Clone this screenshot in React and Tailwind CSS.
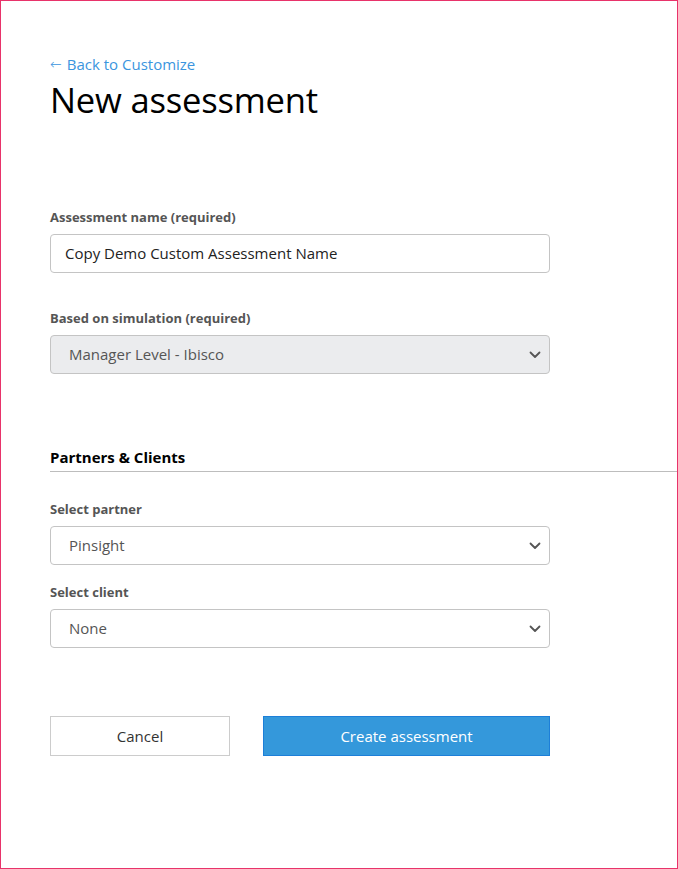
import React from "react";

const font = { fontFamily: '"Open Sans", "Noto Sans", sans-serif' };

function Chevron() {
  return (
    <svg width="12" height="8" viewBox="0 0 12 8" className="shrink-0">
      <path d="M1.5 1.5 L6 6 L10.5 1.5" fill="none" stroke="#555" strokeWidth="1.8" strokeLinecap="round" strokeLinejoin="round" />
    </svg>
  );
}

function Select({ value, disabled }) {
  return (
    <div
      className={`w-[500px] h-[39px] rounded-[4px] border border-[#c4c4c4] flex items-center justify-between pl-[18px] pr-[8px] ${
        disabled ? "bg-[#ebecee]" : "bg-white"
      }`}
    >
      <span className="text-[15px] text-[#555] leading-none">{value}</span>
      <Chevron />
    </div>
  );
}

function Label({ children, className = "" }) {
  return (
    <div className={`text-[13px] leading-[16px] font-bold text-[#555] ${className}`}>{children}</div>
  );
}

export default function App() {
  return (
    <div style={font} className="w-[678px] h-[869px] border border-[#e8336a] bg-white box-border overflow-hidden">
      <div className="flex flex-col pl-[49px] pt-[53px]">
        <a className="text-[15px] leading-[20px] text-[#3b95de] flex items-center gap-[5px]">
          <span className="font-['DejaVu_Sans',sans-serif] text-[14px] font-extralight">←</span>
          <span>Back to Customize</span>
        </a>
        <h1 className="mt-[4px] text-[34.6px] leading-[44px] font-medium text-black tracking-[-0.2px]">New assessment</h1>

        <Label className="mt-[87px]">Assessment name (required)</Label>
        <div className="mt-[9px] w-[500px] h-[39px] rounded-[4px] border border-[#c4c4c4] flex items-center pl-[14px]">
          <span className="text-[15px] text-[#222] leading-none">Copy Demo Custom Assessment Name</span>
        </div>

        <Label className="mt-[37px]">Based on simulation (required)</Label>
        <div className="mt-[9px]">
          <Select value="Manager Level - Ibisco" disabled />
        </div>

        <div className="mt-[73px] border-b border-[#bdbdbd] pb-[4px]">
          <div className="text-[15px] leading-[20px] font-bold text-black">Partners &amp; Clients</div>
        </div>

        <Label className="mt-[29px]">Select partner</Label>
        <div className="mt-[9px]">
          <Select value="Pinsight" />
        </div>

        <Label className="mt-[19px]">Select client</Label>
        <div className="mt-[9px]">
          <Select value="None" />
        </div>

        <div className="mt-[68px] flex items-center gap-[33px]">
          <button className="w-[180px] h-[40px] border border-[#cccccc] bg-white text-[15px] text-[#333]">Cancel</button>
          <button className="w-[287px] h-[40px] border border-[#1d7fd8] bg-[#3498db] text-[15px] text-white">Create assessment</button>
        </div>
      </div>
    </div>
  );
}
